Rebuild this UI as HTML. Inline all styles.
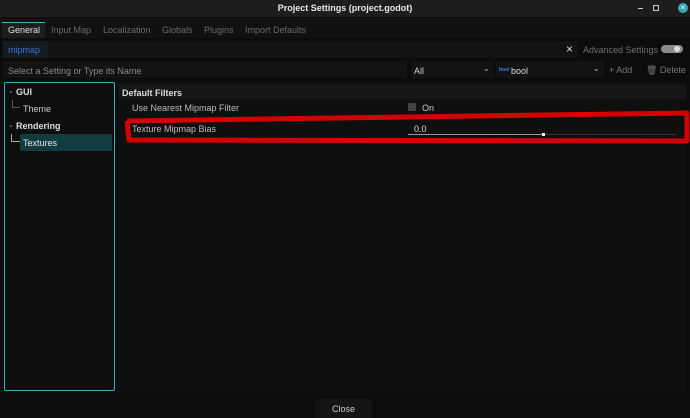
<!DOCTYPE html>
<html><head><style>
*{box-sizing:border-box;margin:0;padding:0}
body{width:690px;height:418px;background:#0c0c0c;font-family:"Liberation Sans",sans-serif;font-size:9px;color:#c8c8c8;position:relative;overflow:hidden}
.a{position:absolute}
</style></head><body>
<div class="a" style="left:0;top:0;width:690px;height:17px;background:#1d1d1d"></div>
<div class="a" style="left:0;top:3px;width:690px;text-align:center;color:#e8e8e8;font-weight:bold;font-size:9px">Project Settings (project.godot)</div>
<div class="a" style="left:638px;top:8px;width:5px;height:1px;background:#ccc"></div>
<div class="a" style="left:653px;top:5px;width:6px;height:6px;border:1px solid #ccc"></div>
<div class="a" style="left:678px;top:3px;width:10px;height:10px;border-radius:50%;background:#3aa8b5;color:#fff;font-size:8px;line-height:10px;text-align:center">×</div>
<div class="a" style="left:0;top:18px;width:690px;height:20px;background:#111"></div>
<div class="a" style="left:2px;top:22px;width:43px;height:16px;background:#1e1e1e;border-top:1px solid #3fb0bf"></div>
<div class="a" style="top:25px;left:8px;color:#e0e0e0">General</div>
<div class="a" style="top:25px;left:51px;color:#6a6a6a">Input Map</div>
<div class="a" style="top:25px;left:103px;color:#6a6a6a">Localization</div>
<div class="a" style="top:25px;left:162px;color:#6a6a6a">Globals</div>
<div class="a" style="top:25px;left:204px;color:#6a6a6a">Plugins</div>
<div class="a" style="top:25px;left:245px;color:#6a6a6a">Import Defaults</div>
<div class="a" style="left:3px;top:41px;width:575px;height:17px;background:#131313"></div>
<div class="a" style="left:3px;top:41px;width:45px;height:17px;background:#161b22"></div>
<div class="a" style="top:45px;left:8px;color:#3b6fd8">mipmap</div>
<div class="a" style="top:42px;left:566px;color:#ddd;font-size:12px">×</div>
<div class="a" style="top:45px;left:583px;color:#707070">Advanced Settings</div>
<div class="a" style="left:661px;top:45px;width:22px;height:8px;border-radius:4px;background:#8a8a8a"></div>
<div class="a" style="left:674px;top:46px;width:6px;height:6px;border-radius:50%;background:#ddd"></div>
<div class="a" style="left:3px;top:61px;width:404px;height:17px;background:#131313"></div>
<div class="a" style="top:66px;left:8px;color:#888">Select a Setting or Type its Name</div>
<div class="a" style="left:411px;top:61px;width:83px;height:17px;background:#131313"></div>
<div class="a" style="top:66px;left:414px;color:#ccc">All</div>
<div class="a" style="top:64px;left:483px;color:#bbb;font-size:8px">⌄</div>
<div class="a" style="left:496px;top:61px;width:108px;height:17px;background:#131313"></div>
<div class="a" style="top:67px;left:499px;color:#3b7ce8;font-size:5px;font-weight:bold">bool</div>
<div class="a" style="top:66px;left:511px;color:#ddd">bool</div>
<div class="a" style="top:64px;left:593px;color:#bbb;font-size:8px">⌄</div>
<div class="a" style="top:65px;left:609px;color:#777">+ Add</div>
<div class="a" style="top:65px;left:646px;color:#777">🗑 Delete</div>
<div class="a" style="left:4px;top:82px;width:111px;height:309px;border:1px solid #3fb0bf;border-radius:2px;background:#0e0e0e"></div>
<div class="a" style="top:87px;left:8px;color:#888;font-size:7px">⌄</div>
<div class="a" style="top:87px;left:16px;color:#ddd;font-weight:bold">GUI</div>
<div class="a" style="left:12px;top:100px;width:8px;height:8px;border-left:1px solid #555;border-bottom:1px solid #555"></div>
<div class="a" style="top:104px;left:23px;color:#ccc">Theme</div>
<div class="a" style="top:121px;left:8px;color:#888;font-size:7px">⌄</div>
<div class="a" style="top:121px;left:16px;color:#ddd;font-weight:bold">Rendering</div>
<div class="a" style="left:11px;top:134px;width:9px;height:8px;border-left:1px solid #aaa;border-bottom:1px solid #aaa"></div>
<div class="a" style="left:20px;top:134px;width:92px;height:17px;background:#113d40;border-radius:2px"></div>
<div class="a" style="top:138px;left:23px;color:#e8e8e8">Textures</div>
<div class="a" style="left:118px;top:82px;width:568px;height:310px;background:#0f0f0f"></div>
<div class="a" style="left:118px;top:84px;width:568px;height:15px;background:#161616"></div>
<div class="a" style="top:88px;left:122px;color:#ddd;font-weight:bold">Default Filters</div>
<div class="a" style="top:103px;left:132px;color:#bbb">Use Nearest Mipmap Filter</div>
<div class="a" style="left:408px;top:103px;width:8px;height:8px;background:#444;border-radius:1px"></div>
<div class="a" style="top:103px;left:422px;color:#ccc">On</div>
<div class="a" style="top:124px;left:132px;color:#bbb">Texture Mipmap Bias</div>
<div class="a" style="top:124px;left:414px;color:#ddd">0.0</div>
<div class="a" style="left:408px;top:134px;width:269px;height:1px;background:#333"></div>
<div class="a" style="left:408px;top:134px;width:136px;height:1px;background:#999"></div>
<div class="a" style="left:542px;top:133px;width:3px;height:3px;background:#eee"></div>
<svg class="a" style="left:0;top:0" width="690" height="418"><path d="M127 121 L687 113 L687 141 L129 140 L127 121" fill="none" stroke="#d40000" stroke-width="5" stroke-linejoin="round"/></svg>
<div class="a" style="left:315px;top:399px;width:57px;height:19px;background:#141414"></div>
<div class="a" style="top:404px;left:315px;width:57px;text-align:center;color:#ccc">Close</div>
</body></html>
